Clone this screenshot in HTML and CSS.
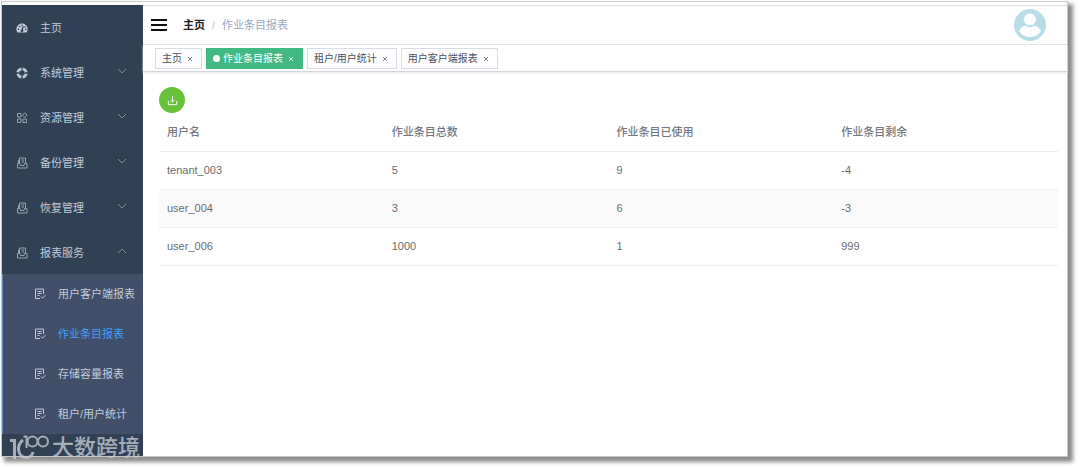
FILE: index.html
```html
<!DOCTYPE html>
<html lang="zh-CN">
<head>
<meta charset="utf-8">
<title>作业条目报表</title>
<link rel="stylesheet" href="styles.css">
</head>
<body>
<svg class="defs" aria-hidden="true">
  <symbol id="down" viewBox="0 0 10 6"><path d="M1 1l4 4 4-4" fill="none" stroke="currentColor" stroke-width=".9"/></symbol>
  <symbol id="x" viewBox="0 0 6 6"><path d="M1 1l4 4M5 1L1 5" fill="none" stroke="currentColor" stroke-width=".9"/></symbol>
  <symbol id="box" viewBox="0 0 12 12"><path d="M3.500 6.500V1h6v5.500M5.500 3h2.500M5.500 5h2.500M3.500 3H2.500v3.500M1.500 6.500v4.500h9.500V6.500H8.500L8 8.500H4.500L4 6.500z" fill="none" stroke="currentColor"/></symbol>
  <symbol id="doc" viewBox="0 0 12 12"><path d="M9.500 6V1H1.500v9.500H6M3.500 3.500h4M3.500 5.500h4M3.500 7.500h2M7 8.500l1.500 1.700 3-3" fill="none" stroke="currentColor"/></symbol>
</svg>
<div class="window">
  <nav class="sidebar">
    <div class="menu">
      <a class="item" href="#home"><svg class="icon" viewBox="0 0 12 12"><path d="M1.500 10.500A5.600 5.600 0 1 1 10.500 10.500z" fill="currentColor"/><path d="M6 8.500L7.200 4" stroke="#304156" stroke-width="1.200"/><g fill="#304156"><circle cx="6" cy="8.800" r="1.400"/><circle cx="2.500" cy="7.200" r=".8"/><circle cx="3.600" cy="4.500" r=".8"/><circle cx="6" cy="3.200" r=".7"/><circle cx="9" cy="5" r=".8"/><circle cx="9.700" cy="7.500" r=".8"/></g></svg><span>主页</span></a>
      <button class="item"><svg class="icon" viewBox="0 0 12 12"><circle cx="6" cy="6" r="4.200" fill="none" stroke="currentColor" stroke-width="2.800"/><path d="M6 0v3M6 9v3M0 6h3M9 6h3" stroke="#304156" stroke-width="1.300"/></svg><span>系统管理</span><svg class="arrow"><use href="#down"/></svg></button>
      <button class="item"><svg class="icon thin" viewBox="0 0 12 12"><path d="M1.500 1.500h3.500v3.500H1.500zM1.500 7h3.500v3.500H1.500zM7 7h3.500v3.500H7zM8.800 .8L11 3.200 8.800 5.500 6.500 3.200z" fill="none" stroke="currentColor"/></svg><span>资源管理</span><svg class="arrow"><use href="#down"/></svg></button>
      <button class="item"><svg class="icon thin" viewBox="0 0 12 12"><use href="#box"/></svg><span>备份管理</span><svg class="arrow"><use href="#down"/></svg></button>
      <button class="item"><svg class="icon thin" viewBox="0 0 12 12"><use href="#box"/></svg><span>恢复管理</span><svg class="arrow"><use href="#down"/></svg></button>
      <button class="item" aria-expanded="true"><svg class="icon thin" viewBox="0 0 12 12"><use href="#box"/></svg><span>报表服务</span><svg class="arrow open"><use href="#down"/></svg></button>
    </div>
    <div class="submenu">
      <a href="#client"><svg class="icon"><use href="#doc"/></svg><span>用户客户端报表</span></a>
      <a href="#jobs" aria-current="page"><svg class="icon"><use href="#doc"/></svg><span class="current">作业条目报表</span></a>
      <a href="#storage"><svg class="icon"><use href="#doc"/></svg><span>存储容量报表</span></a>
      <a href="#tenants"><svg class="icon"><use href="#doc"/></svg><span>租户/用户统计</span></a>
    </div>
  </nav>
  <main class="main">
    <header class="navbar">
      <button class="burger" aria-label="菜单"><svg viewBox="0 0 16 14"><path d="M0 2h16M0 7h16M0 12h16" stroke="#111" stroke-width="2"/></svg></button>
      <a class="crumb-home" href="#home">主页</a><span class="slash">/</span><span class="crumb">作业条目报表</span>
      <button class="avatar" aria-label="用户"><svg viewBox="0 0 32 32"><circle cx="16" cy="16" r="16" fill="#b7dde8"/><path d="M5 22Q8 17 11 16.500Q16 20 21 16.500Q24 17 27 22Q23 28 16 28T5 22z" fill="#fff"/><circle cx="16" cy="10.500" r="6.500" fill="#fff" stroke="#b7dde8"/></svg></button>
    </header>
    <div class="tags">
      <a class="tag" href="#home">主页<svg><use href="#x"/></svg></a>
      <a class="tag active" href="#jobs"><i class="dot"></i>作业条目报表<svg><use href="#x"/></svg></a>
      <a class="tag" href="#tenants">租户/用户统计<svg><use href="#x"/></svg></a>
      <a class="tag" href="#client">用户客户端报表<svg><use href="#x"/></svg></a>
    </div>
    <section class="content">
      <button class="download" aria-label="下载"><svg viewBox="0 0 12 12"><path d="M6 1v6.500M3.800 5.500L6 7.700l2.200-2.200M1.500 6.500v4h9v-4" fill="none" stroke="#fff"/></svg></button>
      <table>
        <thead><tr><th>用户名</th><th>作业条目总数</th><th>作业条目已使用</th><th>作业条目剩余</th></tr></thead>
        <tbody>
          <tr><td>tenant_003</td><td>5</td><td>9</td><td>-4</td></tr>
          <tr><td>user_004</td><td>3</td><td>6</td><td>-3</td></tr>
          <tr><td>user_006</td><td>1000</td><td>1</td><td>999</td></tr>
        </tbody>
      </table>
    </section>
  </main>
  <div class="watermark">
    <svg viewBox="0 0 40 28"><g fill="none" stroke="currentColor"><path d="M1 6.500h4.500V25" stroke-width="3"/><path d="M14 6Q9 10 9.500 16Q11 24 18 23.500Q23 23 24 18" stroke-width="3"/><path d="M14.500 2.500h3V14" stroke-width="2"/><circle cx="23.500" cy="7.500" r="5" stroke-width="2"/><circle cx="34" cy="7.500" r="5" stroke-width="2"/></g></svg>
    <span>大数跨境</span>
  </div>
</div>
</body>
</html>
```
FILE: styles.css
```css
* { box-sizing: border-box; }
body {
  margin: 0;
  padding: 1px 12px 11px 1px;
  min-height: 100vh;
  display: flex;
  background: #fff;
  color: #6a6c70;
  font: 11px/16px "Liberation Sans", "Noto Sans CJK SC", sans-serif;
}
button { border: 0; padding: 0; background: none; font: inherit; color: inherit; cursor: pointer; }
a { color: inherit; text-decoration: none; }
svg { display: block; flex: none; }
.defs { position: absolute; width: 0; height: 0; }

.window {
  position: relative;
  flex: 1;
  display: flex;
  border: 1px solid #c4c7c9;
  border-top-color: #ccc;
  padding-top: 3px;
  background: #fff;
  box-shadow: 4px 4px 4px 1px #8c8c8c;
}

.sidebar { width: 141px; flex: none; background: #304156; color: #bfcbd9; }
.menu { display: grid; gap: 1px; }
.item {
  display: flex;
  align-items: center;
  width: 100%;
  height: 44px;
  padding: 2px 16px 0 14px;
  text-align: left;
}
.item span { flex: 1; margin-left: 12px; }
.icon { width: 12px; height: 12px; }
.thin { opacity: 0.7; }
.arrow { width: 10px; height: 6px; margin-bottom: 4px; opacity: 0.6; }
.open { transform: rotate(180deg); }
.submenu { background: #424f68; border-left: 1px solid #5d91c4; }
.submenu a {
  display: flex;
  align-items: center;
  gap: 12px;
  height: 40px;
  padding-left: 31px;
  white-space: nowrap;
}
.current { color: #409eff; }

.main { flex: 1; min-width: 0; }
.navbar {
  display: flex;
  align-items: center;
  height: 40px;
  padding: 0 21px 0 8px;
  border-top: 1px solid #dde0e4;
  border-bottom: 1px solid #dfe2e6;
}
.burger svg { width: 16px; height: 14px; }
.crumb-home { margin-left: 16px; color: #222; font-weight: 700; }
.slash { margin: 0 7px; color: #c0c4cc; }
.crumb { color: #97a8be; }
.avatar { margin-left: auto; }
.avatar svg { width: 32px; height: 32px; }

.tags {
  display: flex;
  gap: 4px;
  height: 27px;
  padding: 3px 12px;
  border-bottom: 1px solid #d3d7dd;
  box-shadow: 0 1px 2px #e4e6e9;
}
.tag {
  display: flex;
  align-items: center;
  height: 21px;
  padding: 0 8px 0 6px;
  border: 1px solid #d8dce5;
  color: #495060;
  font-size: 10px;
  white-space: nowrap;
}
.tag svg { width: 6px; height: 6px; margin-left: 5px; opacity: 0.8; }
.active { background: #42b983; border-color: #42b983; color: #fff; }
.dot { width: 7px; height: 7px; margin-right: 3px; border-radius: 50%; background: #fff; }

.content { padding: 15px 9px 15px 16px; }
.download {
  display: grid;
  place-items: center;
  width: 26px;
  height: 26px;
  border-radius: 50%;
  background: #67c23a;
}
.download svg { width: 11px; height: 11px; }
table { width: 100%; table-layout: fixed; border-collapse: collapse; }
th, td { height: 38px; padding: 0 8px; border-bottom: 1px solid #ebeef5; text-align: left; font-weight: 400; }
th { color: #75787f; font-weight: 500; }
tbody tr:nth-child(even) { background: #fafafa; }

.watermark {
  position: absolute;
  left: 7px;
  bottom: -6px;
  display: flex;
  align-items: center;
  gap: 3px;
  color: #c3cad1;
  opacity: 0.8;
  font-size: 22px;
  line-height: 28px;
  font-weight: 500;
}
.watermark svg { width: 40px; height: 28px; }
```
